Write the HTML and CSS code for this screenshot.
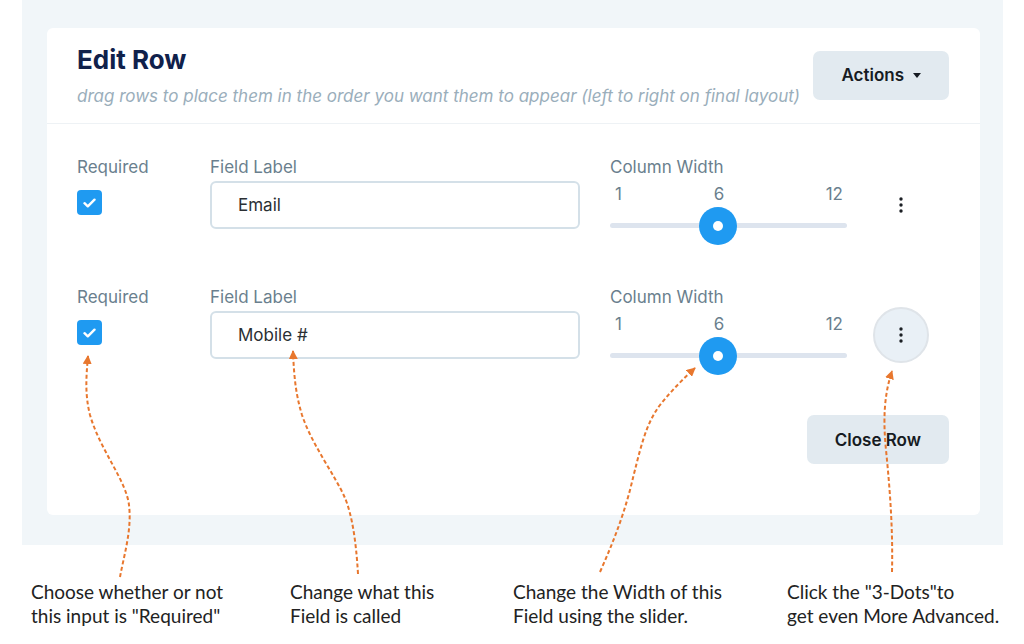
FILE: index.html
```html
<!DOCTYPE html>
<html lang="en">
<head>
  <meta charset="UTF-8" />
  <meta name="viewport" content="width=device-width, initial-scale=1.0"/>
  <title>Edit Row</title>
  <link rel="stylesheet" href="styles.css">
</head>
<body>

<div class="page">
  <div class="panel">
    <div class="card">
      <div class="card-header">
        <div>
          <h1 class="title">Edit Row</h1>
          <p class="subtitle">drag rows to place them in the order you want them to appear (left to right on final layout)</p>
        </div>
        <div class="btn">Actions <span class="caret"></span></div>
      </div>

      <div class="rows">
        <div class="row">
          <div class="label">Required</div>
          <div class="label">Field Label</div>
          <div class="label">Column Width</div>
          <div></div>

          <div class="check">
            <svg width="13" height="10" viewBox="0 0 13 10"><path d="M1.5 5.2 L4.8 8.3 L11.5 1.7" fill="none" stroke="#fff" stroke-width="2.4" stroke-linecap="round" stroke-linejoin="round"/></svg>
          </div>
          <div class="input">Email</div>
          <div class="slider">
            <div class="ticks"><span>1</span><span>6</span><span>12</span></div>
            <div class="track"><div class="thumb" style="left: 45.45%"></div></div>
          </div>
          <div class="kebab">
            <svg width="4" height="16" viewBox="0 0 4 16"><circle cx="2" cy="2" r="1.7"/><circle cx="2" cy="8" r="1.7"/><circle cx="2" cy="14" r="1.7"/></svg>
          </div>
        </div>

        <div class="row">
          <div class="label">Required</div>
          <div class="label">Field Label</div>
          <div class="label">Column Width</div>
          <div></div>

          <div class="check">
            <svg width="13" height="10" viewBox="0 0 13 10"><path d="M1.5 5.2 L4.8 8.3 L11.5 1.7" fill="none" stroke="#fff" stroke-width="2.4" stroke-linecap="round" stroke-linejoin="round"/></svg>
          </div>
          <div class="input">Mobile #</div>
          <div class="slider">
            <div class="ticks"><span>1</span><span>6</span><span>12</span></div>
            <div class="track"><div class="thumb" style="left: 45.45%"></div></div>
          </div>
          <div class="kebab active">
            <svg width="4" height="16" viewBox="0 0 4 16"><circle cx="2" cy="2" r="1.7"/><circle cx="2" cy="8" r="1.7"/><circle cx="2" cy="14" r="1.7"/></svg>
          </div>
        </div>
      </div>

      <div class="card-footer">
        <div class="btn">Close Row</div>
      </div>
    </div>
  </div>

  <div class="notes">
    <div class="note">Choose whether or not<br>this input is "Required"</div>
    <div class="note">Change what this<br>Field is called</div>
    <div class="note">Change the Width of this<br>Field using the slider.</div>
    <div class="note">Click the "3-Dots"to<br>get even More Advanced.</div>
  </div>

  <!-- callout arrows drawn over the screenshot -->
  <svg class="arrows" width="1024" height="644" viewBox="0 0 1024 644">
    <defs>
      <marker id="head" viewBox="0 0 10 10" refX="9" refY="5" markerWidth="9" markerHeight="9" markerUnits="userSpaceOnUse" orient="auto">
        <path d="M0 0 L10 5 L0 10 z" fill="#e8772e"/>
      </marker>
    </defs>
    <path d="M120 577 C 124 555, 132 530, 129 505 C 126 480, 100 450, 90 415 C 85 395, 86 378, 88 356" marker-end="url(#head)"/>
    <path d="M358 574 C 356 540, 352 515, 345 498 C 335 475, 312 445, 302 415 C 296 395, 294 378, 293 351" marker-end="url(#head)"/>
    <path d="M600 572 C 612 545, 622 520, 630 490 C 640 450, 645 425, 660 405 C 672 390, 684 378, 695 368" marker-end="url(#head)"/>
    <path d="M892 572 C 893 530, 890 490, 886 450 C 883 420, 884 395, 892 371" marker-end="url(#head)"/>
  </svg>
</div>

</body>
</html>
```

FILE: styles.css
```css
* { box-sizing: border-box; }
body {
  margin: 0;
  background: #fff;
  font-family: 'Inter', 'Liberation Sans', sans-serif;
  color: #1f2933;
}
.page {
  position: relative;
  width: 1024px;
  height: 644px;
  overflow: hidden;
}
.panel {
  margin: 0 21px 0 22px;
  height: 545px;
  padding: 28px 23px 0 25px;
  background: #f1f6f9;
}
.card {
  background: #fff;
  border-radius: 6px;
  height: 487px;
}
.card-header {
  display: flex;
  justify-content: space-between;
  align-items: center;
  padding: 16px 31px 17px 30px;
  border-bottom: 1px solid #eef2f5;
}
.title {
  margin: 0;
  font-size: 26px;
  line-height: 32px;
  font-weight: 700;
  color: #10214b;
}
.subtitle {
  margin: 10px 0 0;
  font-size: 17px;
  line-height: 20px;
  font-style: italic;
  color: #9aaebb;
}
.btn {
  display: flex;
  align-items: center;
  gap: 9px;
  height: 49px;
  padding: 0 28px;
  background: #e2eaf0;
  border-radius: 7px;
  font-size: 17px;
  font-weight: 600;
  color: #161b22;
}
.caret {
  width: 0;
  height: 0;
  border-left: 4.5px solid transparent;
  border-right: 4.5px solid transparent;
  border-top: 5px solid #161b22;
}
.rows {
  padding: 33px 30px 0;
  display: flex;
  flex-direction: column;
  gap: 43px;
}
.row {
  display: grid;
  grid-template-columns: 133px 400px 263px 56px;
  grid-template-rows: 20px auto;
  row-gap: 4px;
  height: 87px;
}
.label {
  font-size: 17px;
  line-height: 20px;
  color: #6a7f8e;
}
.check {
  width: 25px;
  height: 25px;
  margin-top: 9px;
  border-radius: 4px;
  background: #1f9af1;
  display: flex;
  align-items: center;
  justify-content: center;
}
.input {
  width: 370px;
  height: 48px;
  border: 2px solid #d4e0e8;
  border-radius: 6px;
  padding: 0 26px;
  display: flex;
  align-items: center;
  font-size: 17px;
  color: #2b2f33;
}
.slider { width: 237px; }
.ticks {
  display: grid;
  grid-template-columns: 88px 32px 1fr;
  padding: 3px 4px 0 5px;
  font-size: 17px;
  line-height: 20px;
  color: #6a7f8e;
}
.ticks span:nth-child(2) { text-align: center; }
.ticks span:nth-child(3) { text-align: right; }
.track {
  position: relative;
  margin-top: 19px;
  height: 5px;
  border-radius: 3px;
  background: #dde4ee;
}
.thumb {
  position: absolute;
  top: 50%;
  width: 38px;
  height: 38px;
  margin: -19px 0 0 -19px;
  border-radius: 50%;
  background: #1f9af1;
}
.thumb::after {
  content: "";
  position: absolute;
  left: 14px;
  top: 14px;
  width: 10px;
  height: 10px;
  border-radius: 50%;
  background: #fff;
}
.kebab {
  width: 56px;
  height: 56px;
  margin-top: -4px;
  border-radius: 50%;
  border: 2px solid transparent;
  display: flex;
  align-items: center;
  justify-content: center;
  fill: #1b1f24;
}
.kebab.active {
  background: #e9f0f6;
  border-color: #dfe4e9;
}
.card-footer {
  display: flex;
  justify-content: flex-end;
  padding: 41px 31px 0;
}
.notes {
  display: flex;
  padding: 35px 0 0 31px;
  font-family: 'Lato', 'Liberation Sans', sans-serif;
  font-size: 19px;
  line-height: 24px;
  color: #222;
}
.note:nth-child(1) { width: 259px; }
.note:nth-child(2) { width: 223px; }
.note:nth-child(3) { width: 274px; }
.arrows {
  position: absolute;
  left: 0;
  top: 0;
  pointer-events: none;
}
.arrows > path {
  fill: none;
  stroke: #e8772e;
  stroke-width: 2;
  stroke-dasharray: 4 2.5;
}
```
